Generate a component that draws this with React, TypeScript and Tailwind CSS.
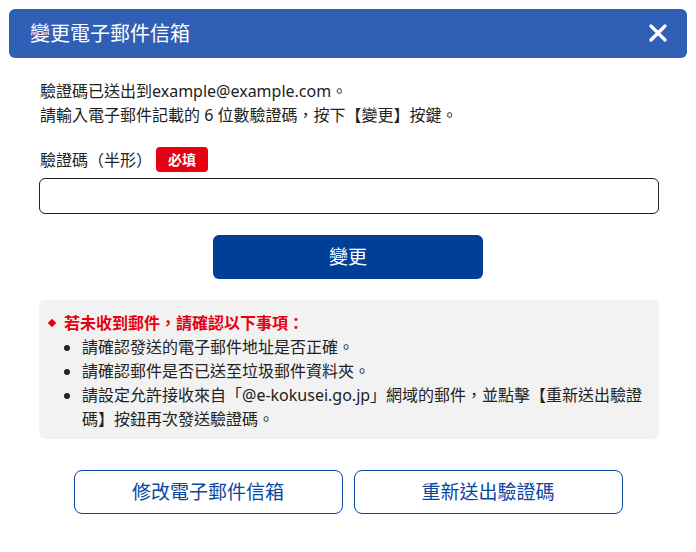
import React from "react"

const font = { fontFamily: '"Noto Sans", "Noto Sans CJK TC", sans-serif' }

function Bullet({ children }: { children: React.ReactNode }) {
    return (
        <li className="flex items-start">
            <span className="ml-[25px] mt-[10px] shrink-0 h-[6px] w-[6px] rounded-full bg-[#222]" />
            <span className="ml-[12px] flex-1">{children}</span>
        </li>
    )
}

export default function App() {
    return (
        <div className="w-[696px] h-[552px] bg-white text-[#222]" style={font}>
            <div className="mx-[9px] pt-[9px]">
                <div className="h-[49px] rounded-[6px] bg-[#3060b5] flex items-center justify-between pl-[21px] pr-[20px]">
                    <h1 className="text-white text-[20px]">變更電子郵件信箱</h1>
                    <svg width="18" height="18" viewBox="0 0 18 18" className="mt-[-2px]">
                        <path d="M2 2 L16 16 M16 2 L2 16" stroke="white" strokeWidth="3.2" strokeLinecap="round" />
                    </svg>
                </div>
            </div>
            <div className="px-[39px]">
                <div className="pt-[21px] pl-[1px] text-[16px] leading-6">
                    <p>驗證碼已送出到example@example.com。</p>
                    <p>請輸入電子郵件記載的 6 位數驗證碼，按下【變更】按鍵。</p>
                </div>
                <div className="mt-[20px] flex items-center h-[25px] pl-[1px]">
                    <span className="text-[16px]">驗證碼（半形）</span>
                    <span className="ml-[4px] h-[25px] px-[12px] rounded-[4px] bg-[#e60012] text-white text-[14px] font-bold flex items-center">必填</span>
                </div>
                <input
                    type="text"
                    className="mt-[6px] block w-[620px] h-[36px] rounded-[6px] border border-[#222] bg-white outline-none"
                />
                <div className="mt-[21px] flex justify-center">
                    <button className="w-[270px] h-[44px] rounded-[6px] bg-[#003f98] text-white text-[19px]">變更</button>
                </div>
                <div className="mt-[21px] w-[620px] h-[139px] rounded-[6px] bg-[#f2f2f2] pt-[11px] text-[16px] leading-6">
                    <div className="flex items-center text-[#e60012] font-bold">
                        <span className="ml-[10px] mr-[9px] block h-[6px] w-[6px] rotate-45 bg-[#e60012]" />
                        <span>若未收到郵件，請確認以下事項：</span>
                    </div>
                    <ul className="pr-[12px]">
                        <Bullet>請確認發送的電子郵件地址是否正確。</Bullet>
                        <Bullet>請確認郵件是否已送至垃圾郵件資料夾。</Bullet>
                        <Bullet>請設定允許接收來自「@e-kokusei.go.jp」網域的郵件，並點擊【重新送出驗證碼】按鈕再次發送驗證碼。</Bullet>
                    </ul>
                </div>
            </div>
            <div className="mt-[31px] flex justify-center gap-[11px]">
                <button className="w-[269px] h-[44px] rounded-[8px] border border-[#0a47a0] text-[#0a47a0] text-[19px] bg-white">修改電子郵件信箱</button>
                <button className="w-[269px] h-[44px] rounded-[8px] border border-[#0a47a0] text-[#0a47a0] text-[19px] bg-white">重新送出驗證碼</button>
            </div>
        </div>
    )
}
